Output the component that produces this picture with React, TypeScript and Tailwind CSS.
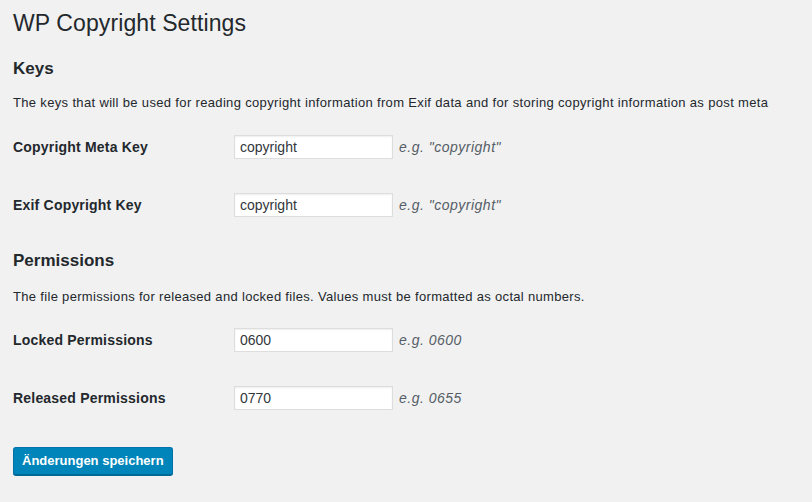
export default function App() {
  const font = { fontFamily: '"Liberation Sans", Arial, sans-serif' };
  return (
    <div className="min-h-[502px] w-full bg-[#f1f1f1] text-[#23282d] px-[13px]" style={font}>
      <h1 className="pt-[9px] text-[23px] leading-[29px] font-normal tracking-[0.1px]">WP Copyright Settings</h1>

      <h2 className="mt-[20px] text-[17px] leading-[22px] font-bold">Keys</h2>
      <p className="mt-[14px] text-[13px] leading-[18px] tracking-[0.34px]">
        The keys that will be used for reading copyright information from Exif data and for storing copyright information as post meta
      </p>
      <div className="mt-[6px]">
        <Row label="Copyright Meta Key" value="copyright" hint={'e.g. "copyright"'} />
        <Row label="Exif Copyright Key" value="copyright" hint={'e.g. "copyright"'} />
      </div>

      <h2 className="mt-[16px] text-[17px] leading-[22px] font-bold">Permissions</h2>
      <p className="mt-[16px] text-[13px] leading-[18px] tracking-[0.32px]">
        The file permissions for released and locked files. Values must be formatted as octal numbers.
      </p>
      <div className="mt-[5px]">
        <Row label="Locked Permissions" value="0600" hint="e.g. 0600" />
        <Row label="Released Permissions" value="0770" hint="e.g. 0655" />
      </div>

      <button className="mt-[20px] h-[28px] px-[8px] rounded-[3px] bg-[#0085ba] border border-[#0073aa] border-b-[#006799] text-white text-[13px] font-bold shadow-[0_1px_0_#006799]">
        Änderungen speichern
      </button>
    </div>
  );
}

function Row({ label, value, hint }: { label: string; value: string; hint: string }) {
  return (
    <div className="flex items-center h-[58px]">
      <div className="w-[221px] text-[14px] font-bold tracking-[0.2px]">{label}</div>
      <input
        readOnly
        value={value}
        className="w-[159px] h-[24px] bg-white border border-[#ddd] shadow-[inset_0_1px_2px_rgba(0,0,0,0.07)] px-[5px] text-[14px] text-[#32373c] outline-none"
      />
      <span className="ml-[6px] text-[14px] italic text-[#555d66] tracking-[0.5px]">{hint}</span>
    </div>
  );
}
